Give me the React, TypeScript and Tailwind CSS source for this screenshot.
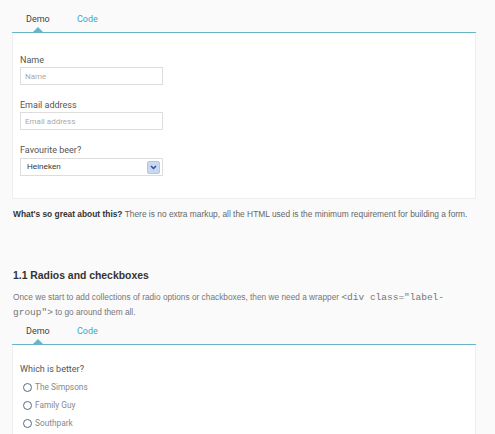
import { useState } from "react";

function Tabs() {
    return (
        <div className="relative flex items-end h-[20px] pl-[14px] border-b border-[#67b5c8] font-['Roboto',sans-serif] text-[9px]">
            <span className="w-[51px] pb-[6px] text-[#444]">Demo</span>
            <span className="pb-[6px] text-[#3fa6c8]">Code</span>
            {/* active marker */}
            <span className="absolute left-[21px] bottom-0 w-0 h-0 border-l-[5px] border-r-[5px] border-b-[5px] border-l-transparent border-r-transparent border-b-[#67b5c8]" />
        </div>
    );
}

function Field({ label, placeholder }: { label: string; placeholder: string }) {
    return (
        <div className="flex flex-col">
            <label className="text-[9px] leading-[12px] text-[#555]">{label}</label>
            <input
                placeholder={placeholder}
                className="mt-[1px] w-[143px] h-[18px] border border-[#ddd] bg-white px-[4px] text-[8px] text-[#444] placeholder:text-[#aaa] outline-none"
            />
        </div>
    );
}

const shows = ["The Simpsons", "Family Guy", "Southpark"];

export default function App() {
    const [pick, setPick] = useState("");

    return (
        <div className="w-[495px] h-[434px] overflow-hidden bg-[#fafafa] pl-[12px] pr-[19px] pt-[13px] font-['Roboto',sans-serif]">
            <Tabs />

            {/* Demo card */}
            <div className="bg-white border border-t-0 border-[#eee] pl-[7px] pt-[21px] pb-[22px] flex flex-col gap-[14px]">
                <Field label="Name" placeholder="Name" />
                <Field label="Email address" placeholder="Email address" />
                <div className="flex flex-col">
                    <label className="text-[9px] leading-[12px] text-[#555]">Favourite beer?</label>
                    <div className="mt-[2px] w-[143px] h-[18px] border border-[#ddd] bg-white flex items-center justify-between pl-[6px] pr-[2px]">
                        <span className="text-[8px] text-[#333] font-['Liberation_Sans',sans-serif]">Heineken</span>
                        <span className="w-[13px] h-[13px] rounded-[2px] bg-[#c9d8f2] border border-[#b3c6ea] flex items-center justify-center">
                            <svg width="7" height="5" viewBox="0 0 7 5">
                                <path d="M1 1 L3.5 3.5 L6 1" fill="none" stroke="#2d4f8e" strokeWidth="1.5" />
                            </svg>
                        </span>
                    </div>
                </div>
            </div>

            <p className="mt-[10px] pl-[1px] text-[8.4px] leading-[11px] text-[#666] font-['Liberation_Sans',sans-serif] whitespace-nowrap">
                <b className="text-[#333]">What's so great about this?</b> There is no extra markup, all the HTML used is the minimum requirement for building a form.
            </p>

            <h2 className="mt-[49px] pl-[1px] text-[10.4px] leading-[14px] font-bold text-[#333] font-['Liberation_Sans',sans-serif]">
                1.1 Radios and checkboxes
            </h2>
            <p className="mt-[7px] pl-[1px] w-[445px] text-[8.3px] leading-[15px] text-[#777] font-['Liberation_Sans',sans-serif]">
                Once we start to add collections of radio options or chackboxes, then we need a wrapper{" "}
                <code className="font-['Liberation_Mono',monospace] text-[9.5px] text-[#777]">&lt;div class="label-</code>
                <code className="font-['Liberation_Mono',monospace] text-[9.5px] text-[#777]">group"&gt;</code> to go around them all.
            </p>

            <div className="mt-[5px]">
                <Tabs />
            </div>

            {/* Radios card */}
            <div className="bg-white border border-t-0 border-[#eee] pl-[7px] pt-[18px] h-[120px]">
                <div className="text-[9px] leading-[12px] text-[#555]">Which is better?</div>
                <div className="mt-[3px] flex flex-col">
                    {shows.map((s) => (
                        <label key={s} className="flex items-center h-[18px] pl-[3px] gap-[3px] cursor-pointer" onClick={() => setPick(s)}>
                            <span className="w-[9px] h-[9px] rounded-full border border-[#5b6b80] bg-white flex items-center justify-center">
                                {pick === s && <span className="w-[4px] h-[4px] rounded-full bg-[#333]" />}
                            </span>
                            <span className="text-[8.3px] text-[#888]">{s}</span>
                        </label>
                    ))}
                </div>
            </div>
        </div>
    );
}
